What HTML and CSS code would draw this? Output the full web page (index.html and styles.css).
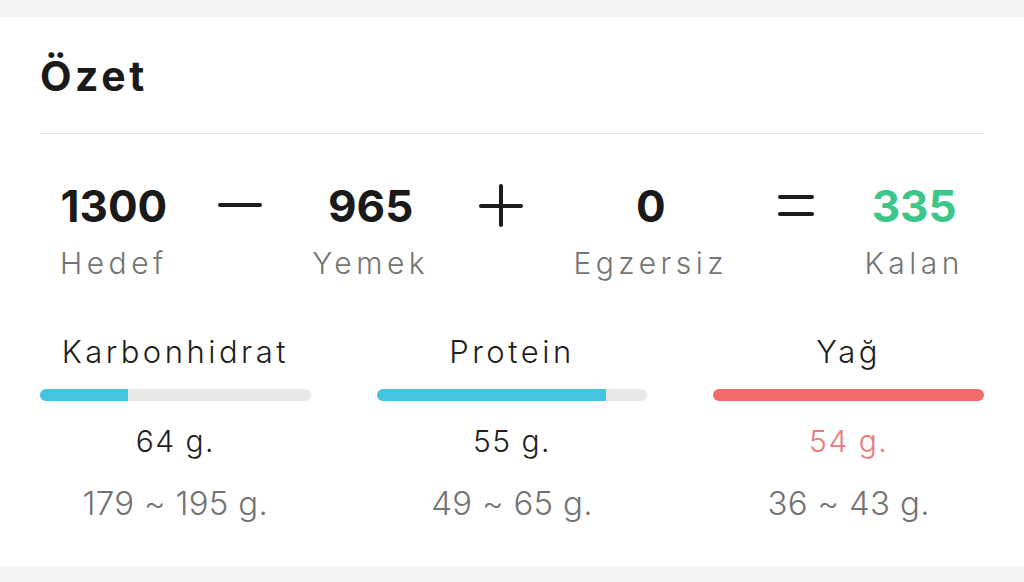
FILE: index.html
```html
<!DOCTYPE html>
<html lang="tr">
<head>
<meta charset="utf-8">
<title>Özet</title>
<link rel="stylesheet" href="styles.css">
</head>
<body>
<section class="card">
  <h1 class="title">Özet</h1>
  <div class="divider"></div>
  <div class="equation">
    <div class="term">
      <div class="num">1300</div>
      <div class="label">Hedef</div>
    </div>
    <svg class="op op-wide" width="44" height="52" viewBox="0 0 44 52"><line x1="2" y1="25" x2="42" y2="25"/></svg>
    <div class="term">
      <div class="num">965</div>
      <div class="label">Yemek</div>
    </div>
    <svg class="op op-wide" width="44" height="52" viewBox="0 0 44 52"><line x1="2" y1="26" x2="42" y2="26"/><line x1="22" y1="6" x2="22" y2="45"/></svg>
    <div class="term">
      <div class="num">0</div>
      <div class="label">Egzersiz</div>
    </div>
    <svg class="op op-narrow" width="36" height="52" viewBox="0 0 36 52"><line x1="2" y1="17" x2="34" y2="17"/><line x1="2" y1="34" x2="34" y2="34"/></svg>
    <div class="term">
      <div class="num num-green">335</div>
      <div class="label">Kalan</div>
    </div>
  </div>
  <div class="macros">
    <div class="macro">
      <div class="macro-name">Karbonhidrat</div>
      <div class="bar"><div class="fill fill-blue" style="width:32.6%"></div></div>
      <div class="macro-value">64 g.</div>
      <div class="macro-range">179 ~ 195 g.</div>
    </div>
    <div class="macro">
      <div class="macro-name">Protein</div>
      <div class="bar"><div class="fill fill-blue" style="width:84.6%"></div></div>
      <div class="macro-value">55 g.</div>
      <div class="macro-range">49 ~ 65 g.</div>
    </div>
    <div class="macro">
      <div class="macro-name">Yağ</div>
      <div class="bar"><div class="fill fill-red" style="width:100%"></div></div>
      <div class="macro-value macro-value-red">54 g.</div>
      <div class="macro-range">36 ~ 43 g.</div>
    </div>
  </div>
</section>
</body>
</html>
```
FILE: styles.css
```css
* { box-sizing: border-box; }
html, body { margin: 0; padding: 0; }
body {
  background: #f4f4f4;
  font-family: Inter, "Noto Sans", sans-serif;
  color: #1c1c1c;
  width: 1024px;
  height: 582px;
  overflow: hidden;
}
.card {
  margin-top: 17px;
  background: #ffffff;
  padding: 35px 40px 43px;
}
.title {
  margin: 0;
  font-size: 41px;
  line-height: 48px;
  font-weight: 700;
  letter-spacing: 3.5px;
  color: #1a1a1a;
}
.divider {
  margin-top: 33px;
  height: 1px;
  background: #e2e2e2;
}
.equation {
  margin-top: 46px;
  padding: 0 20px;
  display: flex;
  justify-content: space-between;
  align-items: flex-start;
}
.term {
  display: flex;
  flex-direction: column;
  align-items: center;
}
.num {
  font-size: 44px;
  line-height: 52px;
  font-weight: 700;
  color: #1a1a1a;
  letter-spacing: 0;
}
.num-green { color: #3cc68a; }
.label {
  margin-top: 13px;
  font-size: 30px;
  line-height: 36px;
  font-weight: 300;
  color: #747474;
  letter-spacing: 4.5px;
}
.op {
  display: block;
  stroke: #1c1c1c;
  stroke-width: 4;
  stroke-linecap: round;
  fill: none;
}
.macros {
  margin-top: 53px;
  display: grid;
  grid-template-columns: repeat(3, 1fr);
  column-gap: 66px;
}
.macro {
  display: flex;
  flex-direction: column;
  align-items: stretch;
  text-align: center;
}
.macro-name {
  font-size: 31px;
  line-height: 36px;
  font-weight: 300;
  color: #1e1e1e;
  letter-spacing: 3.5px;
}
.bar {
  margin-top: 19px;
  height: 12px;
  border-radius: 6px;
  background: #e8e8e8;
  overflow: hidden;
}
.fill { height: 100%; }
.fill-blue { background: #45c4e1; }
.fill-red { background: #f26b6b; }
.macro-value {
  margin-top: 22px;
  font-size: 30px;
  line-height: 36px;
  font-weight: 300;
  color: #1e1e1e;
  letter-spacing: 1.5px;
}
.macro-value-red { color: #e97a7a; }
.macro-range {
  margin-top: 24px;
  font-size: 33px;
  line-height: 40px;
  font-weight: 300;
  color: #747474;
  letter-spacing: 0.3px;
}
```
